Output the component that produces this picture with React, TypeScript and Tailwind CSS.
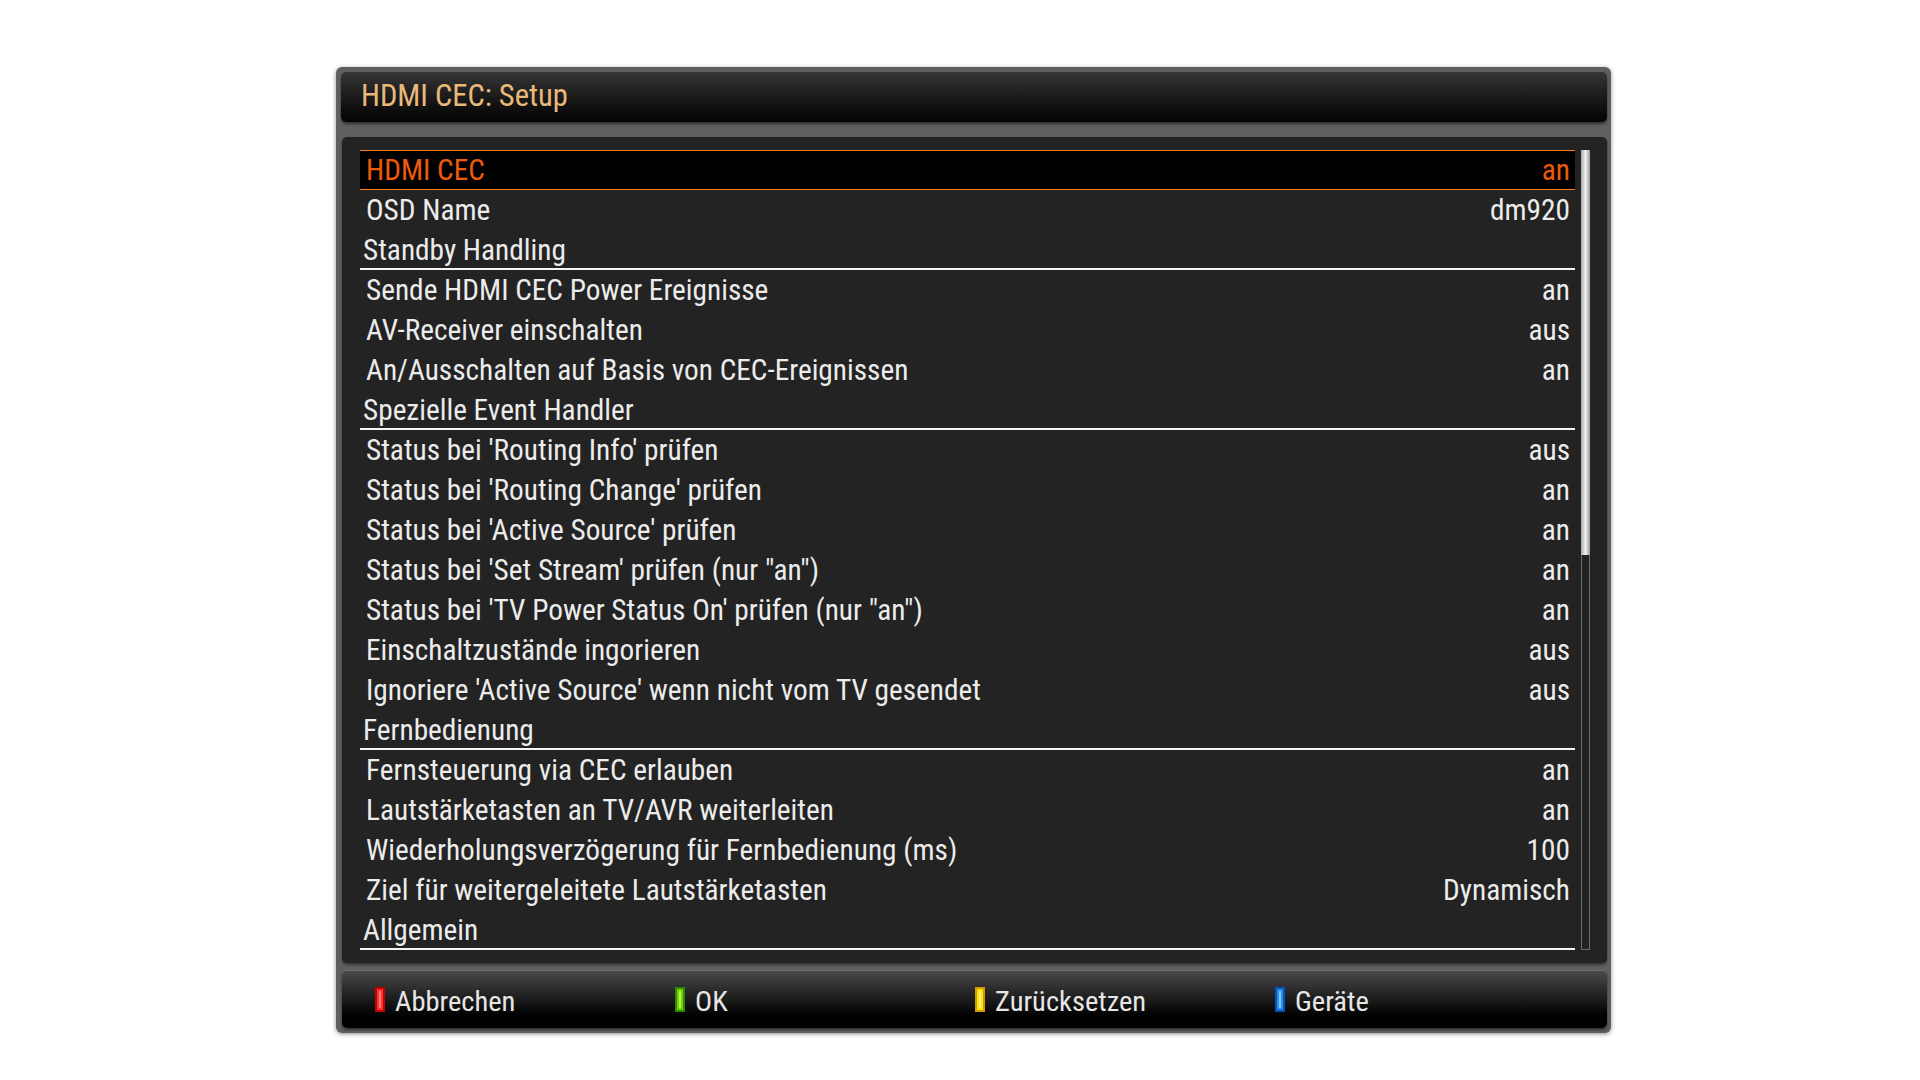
import React from "react";

type Row = { label: string; value?: string; section?: boolean };

const rows: Row[] = [
  { label: "HDMI CEC", value: "an" },
  { label: "OSD Name", value: "dm920" },
  { label: "Standby Handling", section: true },
  { label: "Sende HDMI CEC Power Ereignisse", value: "an" },
  { label: "AV-Receiver einschalten", value: "aus" },
  { label: "An/Ausschalten auf Basis von CEC-Ereignissen", value: "an" },
  { label: "Spezielle Event Handler", section: true },
  { label: "Status bei 'Routing Info' prüfen", value: "aus" },
  { label: "Status bei 'Routing Change' prüfen", value: "an" },
  { label: "Status bei 'Active Source' prüfen", value: "an" },
  { label: "Status bei 'Set Stream' prüfen (nur \"an\")", value: "an" },
  { label: "Status bei 'TV Power Status On' prüfen (nur \"an\")", value: "an" },
  { label: "Einschaltzustände ingorieren", value: "aus" },
  { label: "Ignoriere 'Active Source' wenn nicht vom TV gesendet", value: "aus" },
  { label: "Fernbedienung", section: true },
  { label: "Fernsteuerung via CEC erlauben", value: "an" },
  { label: "Lautstärketasten an TV/AVR weiterleiten", value: "an" },
  { label: "Wiederholungsverzögerung für Fernbedienung (ms)", value: "100" },
  { label: "Ziel für weitergeleitete Lautstärketasten", value: "Dynamisch" },
  { label: "Allgemein", section: true },
];

const buttons = [
  { label: "Abbrechen", cls: "border-[#c40000] bg-[#ff3030]", hi: "bg-[#ff8080]" },
  { label: "OK", cls: "border-[#2f8a00] bg-[#76d400]", hi: "bg-[#b4f060]" },
  { label: "Zurücksetzen", cls: "border-[#d09a00] bg-[#ffe010]", hi: "bg-[#fff080]" },
  { label: "Geräte", cls: "border-[#0a4fb8] bg-[#2590f0]", hi: "bg-[#80c4ff]" },
];

function ListRow({ row, selected }: { row: Row; selected: boolean }) {
  if (row.section) {
    return (
      <div className="h-[40px] flex items-center pt-[4px] pl-[3px] border-b-2 border-[#f4f4f4] text-[#ececec]">
        {row.label}
      </div>
    );
  }
  return (
    <div
      className={
        selected
          ? "h-[40px] flex items-center justify-between pt-[2px] pl-[6px] pr-[5px] bg-black border-y border-[#ff7a10] text-[#ee5a0c]"
          : "h-[40px] flex items-center justify-between pt-[2px] pl-[6px] pr-[5px] text-[#ececec]"
      }
    >
      <span>{row.label}</span>
      <span>{row.value}</span>
    </div>
  );
}

export default function App() {
  return (
    <div className="w-[1920px] h-[1080px] bg-white pt-[67px] pl-[336px] font-['Roboto_Condensed',Roboto,sans-serif]">
      <div className="w-[1275px] h-[966px] bg-[#606060] rounded-md shadow-[0_1px_4px_rgba(0,0,0,0.45)] pt-[5px] pl-[5px] pr-[4px] pb-[5px] flex flex-col">
        {/* Title bar */}
        <div className="h-[50px] rounded-[5px] bg-gradient-to-b from-[#363636] to-[#040404] shadow-[0_2px_3px_rgba(0,0,0,0.5)] flex items-center pl-[20px] pb-[2px] text-[30.5px] text-[#eab978]">
          HDMI CEC: Setup
        </div>

        {/* List */}
        <div className="mt-[15px] ml-[1px] h-[826px] rounded-[5px] bg-[#232323] shadow-[0_2px_3px_rgba(0,0,0,0.45)] pt-[13px] pl-[18px] pr-[17px] flex gap-[6px] text-[29.3px] leading-none">
          <div className="flex-1 flex flex-col">
            {rows.map((r, i) => (
              <ListRow key={i} row={r} selected={i === 0} />
            ))}
          </div>
          <div className="w-[9px] h-[800px] border border-[#6a6a6a] flex flex-col">
            <div className="h-[405px] -m-px bg-gradient-to-r from-[#a8a8a8] via-[#f2f2f2] to-[#9a9a9a]" />
          </div>
        </div>

        {/* Button bar */}
        <div className="mt-[7px] ml-[1px] h-[58px] rounded-[5px] bg-gradient-to-b from-[#4a4a4a] via-[#1c1c1c] to-[#000000] border-t border-[#6e6e6e] shadow-[0_2px_3px_rgba(0,0,0,0.5)] flex items-center pl-[33px] text-[28.5px] text-[#e6e6e6]">
          {buttons.map((b) => (
            <div key={b.label} className="w-[300px] flex items-center gap-[10px]">
              <div className={`w-[10px] h-[25px] border-2 ${b.cls} flex justify-center pt-[2px]`}>
                <div className={`w-[2px] h-[17px] ${b.hi}`} />
              </div>
              <span className="pt-[5px]">{b.label}</span>
            </div>
          ))}
        </div>
      </div>
    </div>
  );
}
